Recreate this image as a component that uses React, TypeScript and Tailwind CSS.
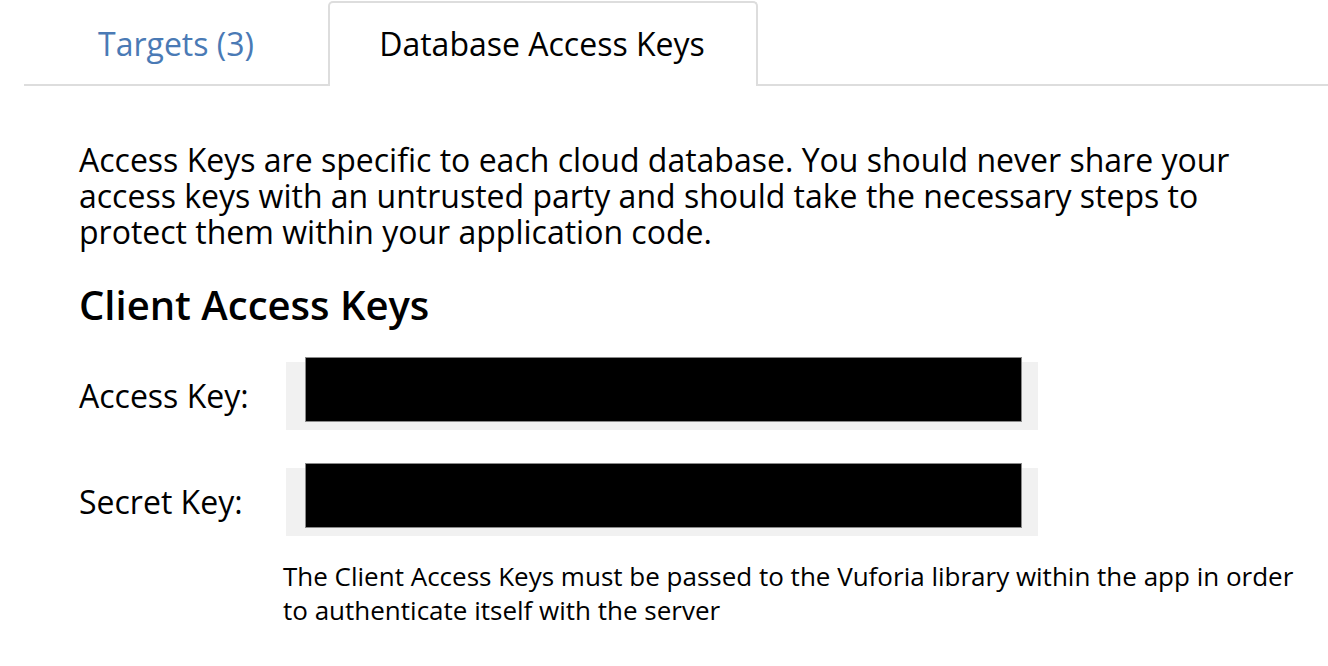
import React from "react";

const KeyRow = ({ label }: { label: string }) => (
  <div className="flex items-center">
    <div className="w-[207px] shrink-0 text-[32px] leading-[40px] text-black">{label}</div>
    {/* masked key field */}
    <div className="flex h-[68px] w-[752px] items-start bg-[#f1f1f1] pl-[19px]">
      <div className="-mt-[5px] h-[65px] w-[717px] border border-[#8a8a8a] bg-black" />
    </div>
  </div>
);

export default function App() {
  return (
    <div className="min-h-[666px] w-full bg-white font-['Open_Sans',sans-serif] text-black">
      {/* Tabs */}
      <div className="flex h-[86px] items-end pl-[24px] pt-[1px]">
        <div className="flex h-full w-[304px] items-center justify-center border-b-2 border-[#dddddd] pt-[2px] text-[32px] text-[#4a7ab5]">
          Targets (3)
        </div>
        <div className="flex h-full w-[430px] items-center justify-center rounded-t-[5px] border-2 border-b-0 border-[#dddddd] pb-[2px] pr-[2px] text-[32px] text-black">
          Database Access Keys
        </div>
        <div className="h-full flex-1 border-b-2 border-[#dddddd]" />
      </div>

      <div className="pl-[79px]">
        <p className="mt-[56px] max-w-[1180px] text-[32px] leading-[36px]">
          Access Keys are specific to each cloud database. You should never share your access keys
          with an untrusted party and should take the necessary steps to protect them within your
          application code.
        </p>

        <h2 className="mt-[31px] text-[40px] font-semibold leading-[48px]">Client Access Keys</h2>

        <div className="mt-[33px] flex flex-col gap-[38px]">
          <KeyRow label="Access Key:" />
          <KeyRow label="Secret Key:" />
        </div>

        <p className="mt-[23px] ml-[204px] max-w-[1030px] text-[26px] leading-[34px]">
          The Client Access Keys must be passed to the Vuforia library within the app in order to
          authenticate itself with the server
        </p>
      </div>
    </div>
  );
}
